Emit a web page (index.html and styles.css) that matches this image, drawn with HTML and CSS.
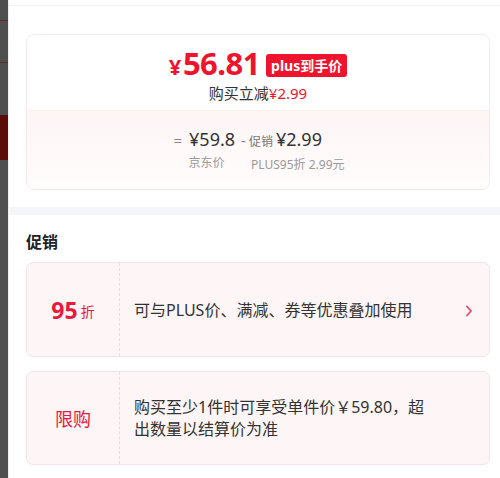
FILE: index.html
```html
<!DOCTYPE html>
<html lang="zh-CN">
<head>
  <meta charset="UTF-8">
  <meta name="viewport" content="width=device-width, initial-scale=1">
  <title>促销详情</title>
  <link rel="stylesheet" href="styles.css">
</head>
<body>
  <!-- 遮罩下的页面 -->
  <div class="backdrop">
    <div class="bd-line"></div>
    <div class="bd-line bd-line-2"></div>
    <div class="bd-red"></div>
  </div>

  <div class="drawer">
    <div class="drawer-top"></div>

    <!-- 价格卡片 -->
    <div class="price-panel">
      <div class="price-card">
        <div class="price-top">
          <div class="price-row">
            <span class="price"><span class="yen">¥</span>56.81</span>
            <span class="badge">plus到手价</span>
          </div>
          <div class="save">购买立减<span class="red">¥2.99</span></div>
        </div>
        <div class="price-bottom">
          <div class="calc">
            <div class="calc-item">
              <div class="calc-val"><span class="op">=</span>¥59.8</div>
              <div class="calc-label">京东价</div>
            </div>
            <div class="calc-item">
              <div class="calc-val"><span class="op">-</span><span class="tag">促销</span>¥2.99</div>
              <div class="calc-label">PLUS95折 2.99元</div>
            </div>
          </div>
        </div>
      </div>
    </div>

    <div class="divider"></div>

    <!-- 促销 -->
    <div class="promo">
      <h2>促销</h2>
      <div class="promo-card">
        <div class="promo-type"><span class="num">95</span><span class="unit">折</span></div>
        <div class="promo-text">可与PLUS价、满减、券等优惠叠加使用</div>
        <svg class="arrow" width="8" height="12" viewBox="0 0 8 12"><polyline points="2,1.5 6,6 2,10.5" fill="none" stroke="#e8496a" stroke-width="1.8" stroke-linecap="round" stroke-linejoin="round"/></svg>
      </div>
      <div class="promo-card">
        <div class="promo-type"><span class="limit">限购</span></div>
        <div class="promo-text">购买至少1件时可享受单件价￥59.80，超出数量以结算价为准</div>
      </div>
    </div>
  </div>
</body>
</html>
```

FILE: styles.css
```css
:root {
  --red: #f0132d;
  --text: #333;
  --gray: #999;
}
* {
  margin: 0;
  padding: 0;
  box-sizing: border-box;
}
body {
  font-family: "Noto Sans", "Noto Sans CJK SC", sans-serif;
  background: #fff;
  color: var(--text);
  display: flex;
  height: 478px;
  overflow: hidden;
}
.backdrop {
  width: 8px;
  background: #4f4f4f;
  position: relative;
  flex-shrink: 0;
}
.bd-line {
  position: absolute;
  left: 0;
  right: 0;
  top: 20px;
  height: 1px;
  background: #5e2a26;
}
.bd-line-2 {
  top: 62px;
}
.bd-red {
  position: absolute;
  left: 0;
  right: 0;
  top: 115px;
  height: 45px;
  background: #5a0e07;
}
.drawer {
  flex: 1;
  background: #fff;
  border-left: 1px solid #eee;
}
.drawer-top {
  height: 6px;
  border-bottom: 1px solid #f2f2f2;
}
.price-panel {
  padding: 28px 10px 17px 17px;
}
.price-card {
  border: 1px solid #f6e9e9;
  border-radius: 8px;
  overflow: hidden;
}
.price-top {
  height: 75px;
  padding-top: 13px;
  text-align: center;
}
.price-row {
  display: flex;
  justify-content: center;
  align-items: center;
  gap: 6px;
  height: 32px;
}
.price {
  color: var(--red);
  font-size: 31px;
  font-weight: 700;
  line-height: 32px;
  letter-spacing: -0.5px;
}
.yen {
  font-size: 22px;
  margin-right: 2px;
}
.badge {
  background: var(--red);
  color: #fff;
  font-size: 14px;
  font-weight: 700;
  padding: 0 5px;
  height: 23px;
  line-height: 23px;
  border-radius: 3px;
  margin-top: 2px;
}
.save {
  font-size: 15px;
  line-height: 20px;
  margin-top: 3px;
}
.red {
  color: var(--red);
}
.price-bottom {
  height: 79px;
  border-top: 1px solid #fbf0f0;
  background: linear-gradient(#fef5f5, #fffcfc);
  padding-top: 16px;
}
.calc {
  display: flex;
  justify-content: center;
  gap: 6px;
  padding-left: 2px;
}
.calc-val {
  font-size: 18px;
  line-height: 24px;
  color: #333;
}
.op {
  color: #888;
  font-size: 15px;
  margin-right: 7px;
}
.calc-item:nth-child(2) .op {
  margin-right: 3px;
}
.tag {
  font-size: 12px;
  color: #777;
  margin-right: 3px;
}
.calc-label {
  font-size: 12px;
  line-height: 18px;
  color: var(--gray);
  margin-top: 2px;
  padding-left: 15px;
}
.calc-item:nth-child(2) .calc-label {
  padding-left: 10px;
}
.divider {
  height: 8px;
  background: #f5f6fa;
}
.promo {
  padding: 15px 10px 0 17px;
}
.promo h2 {
  font-size: 16px;
  font-weight: 700;
  color: #222;
  line-height: 24px;
  margin-bottom: 8px;
}
.promo-card {
  display: flex;
  align-items: center;
  background: #fdf5f6;
  border: 1px solid #f5e4e7;
  border-radius: 7px;
  height: 95px;
  margin-bottom: 14px;
  position: relative;
}
.promo-card + .promo-card {
  height: 94px;
}
.promo-type {
  width: 93px;
  align-self: stretch;
  display: flex;
  justify-content: center;
  align-items: center;
  border-right: 1px dashed #ecdcdf;
  color: #e9193d;
}
.num {
  font-size: 23px;
  font-weight: 700;
}
.unit {
  font-size: 14px;
  margin-left: 3px;
  margin-top: 3px;
}
.limit {
  font-size: 18px;
}
.promo-text {
  font-size: 16px;
  line-height: 22px;
  color: #333;
  padding-left: 14px;
  width: 320px;
}
.arrow {
  position: absolute;
  right: 16px;
  top: 42px;
}
```
